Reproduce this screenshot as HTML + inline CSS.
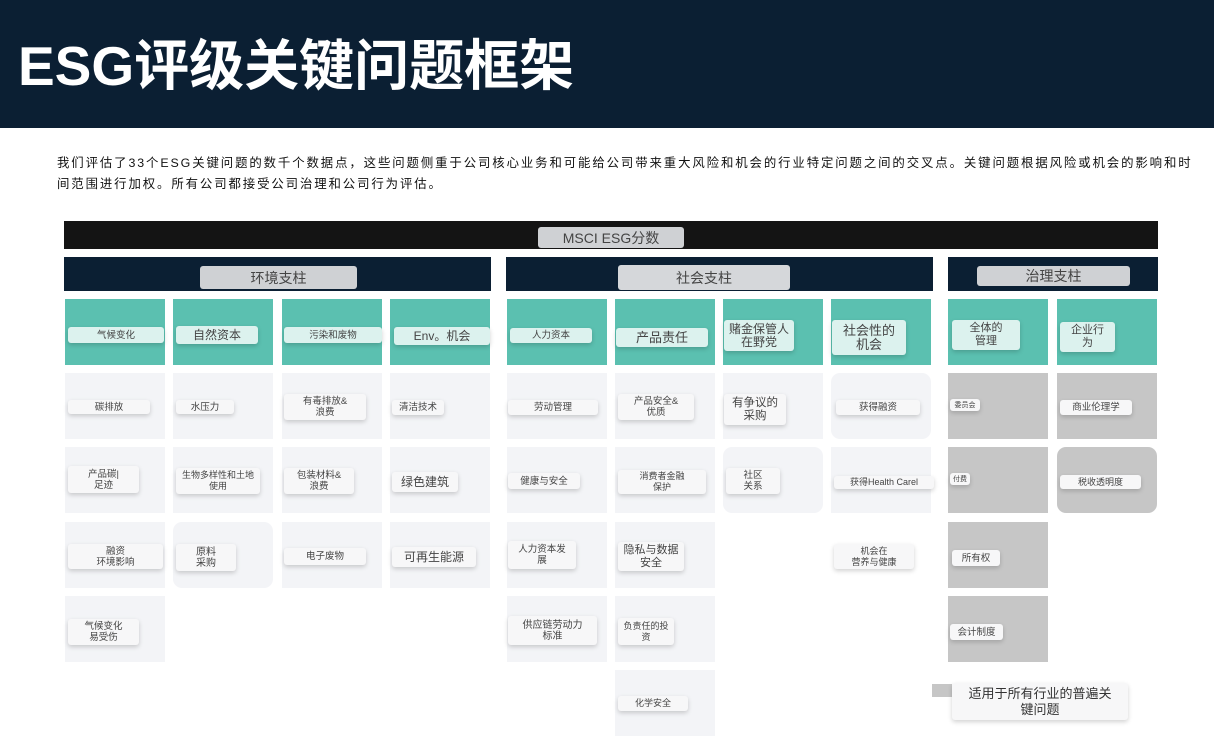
<!DOCTYPE html>
<html><head><meta charset="utf-8"><style>
*{margin:0;padding:0;box-sizing:border-box}
body{width:1214px;height:744px;background:#fff;position:relative;overflow:hidden;font-family:"Liberation Sans","Noto Sans CJK SC",sans-serif;color:#333}
.ban{position:absolute;left:0;top:0;width:1214px;height:128px;background:#0b1f33}
.ban h1{position:absolute;left:18px;top:21px;font-size:55px;font-weight:bold;color:#fff;font-family:"Liberation Sans","Noto Sans CJK SC",sans-serif}
.p{position:absolute;left:57px;top:153px;width:1150px;font-size:12.4px;letter-spacing:1.9px;line-height:21px;color:#111;white-space:nowrap}
.a{position:absolute}
.c{position:absolute;width:100px;height:66px;background:#f3f4f7}
.t{background:#5bc0b0}
.g{background:#c6c6c6}
.r{border-radius:9px}
.l{position:absolute;background:#f7f7f8;border-radius:3px;box-shadow:0 2px 5px rgba(0,0,0,.18);font-size:9.5px;line-height:11px;text-align:center;display:flex;align-items:center;justify-content:center;color:#444;white-space:pre-line}
.tl{background:#dcf2ee}
.ph{position:absolute;background:#0b1f33;height:34px;top:257px}
.pl{position:absolute;background:#cfd1d4;border-radius:3px;font-size:14px;color:#444;display:flex;align-items:center;justify-content:center}
</style></head><body>
<div class="ban"><h1>ESG评级关键问题框架</h1></div>
<div class="p">我们评估了33个ESG关键问题的数千个数据点，这些问题侧重于公司核心业务和可能给公司带来重大风险和机会的行业特定问题之间的交叉点。关键问题根据风险或机会的影响和时<br>间范围进行加权。所有公司都接受公司治理和公司行为评估。</div>
<div class="a" style="left:64px;top:221px;width:1094px;height:28px;background:#141414"></div>
<div class="pl" style="left:538px;top:227px;width:146px;height:21px">MSCI ESG分数</div>
<div class="ph" style="left:64px;width:427px"></div>
<div class="ph" style="left:506px;width:427px"></div>
<div class="ph" style="left:948px;width:210px"></div>
<div class="pl" style="left:200px;top:266px;width:157px;height:23px">环境支柱</div>
<div class="pl" style="left:618px;top:265px;width:172px;height:25px;background:#d5d7da">社会支柱</div>
<div class="pl" style="left:977px;top:266px;width:153px;height:20px">治理支柱</div>

<div class="c t" style="left:65px;top:299px"></div><div class="c t" style="left:173px;top:299px"></div><div class="c t" style="left:282px;top:299px"></div><div class="c t" style="left:390px;top:299px"></div>
<div class="c t" style="left:507px;top:299px"></div><div class="c t" style="left:615px;top:299px"></div><div class="c t" style="left:723px;top:299px"></div><div class="c t" style="left:831px;top:299px"></div>
<div class="c t" style="left:948px;top:299px"></div><div class="c t" style="left:1057px;top:299px"></div>
<div class="c" style="left:65px;top:373px"></div><div class="c" style="left:65px;top:447px"></div><div class="c" style="left:65px;top:522px"></div><div class="c" style="left:65px;top:596px"></div>
<div class="c" style="left:173px;top:373px"></div><div class="c" style="left:173px;top:447px"></div><div class="c r" style="left:173px;top:522px"></div>
<div class="c" style="left:282px;top:373px"></div><div class="c" style="left:282px;top:447px"></div><div class="c" style="left:282px;top:522px"></div>
<div class="c" style="left:390px;top:373px"></div><div class="c" style="left:390px;top:447px"></div><div class="c" style="left:390px;top:522px"></div>
<div class="c" style="left:507px;top:373px"></div><div class="c" style="left:507px;top:447px"></div><div class="c" style="left:507px;top:522px"></div><div class="c" style="left:507px;top:596px"></div>
<div class="c" style="left:615px;top:373px"></div><div class="c" style="left:615px;top:447px"></div><div class="c" style="left:615px;top:522px"></div><div class="c" style="left:615px;top:596px"></div><div class="c" style="left:615px;top:670px"></div>
<div class="c" style="left:723px;top:373px"></div><div class="c r" style="left:723px;top:447px"></div>
<div class="c r" style="left:831px;top:373px"></div><div class="c" style="left:831px;top:447px"></div>
<div class="c g" style="left:948px;top:373px"></div><div class="c g" style="left:948px;top:447px"></div><div class="c g" style="left:948px;top:522px"></div><div class="c g" style="left:948px;top:596px"></div>
<div class="c g" style="left:1057px;top:373px"></div><div class="c g r" style="left:1057px;top:447px"></div>

<div class="l tl" style="left:68px;top:327px;width:96px;height:16px">气候变化</div>
<div class="l tl" style="left:176px;top:326px;width:82px;height:18px;font-size:12px">自然资本</div>
<div class="l tl" style="left:284px;top:327px;width:98px;height:16px">污染和废物</div>
<div class="l tl" style="left:394px;top:327px;width:96px;height:18px;font-size:12px">Env。机会</div>
<div class="l tl" style="left:510px;top:328px;width:82px;height:15px">人力资本</div>
<div class="l tl" style="left:616px;top:328px;width:92px;height:19px;font-size:13px">产品责任</div>
<div class="l tl" style="left:724px;top:320px;width:70px;height:31px;font-size:12px;line-height:13px">赌金保管人
在野党</div>
<div class="l tl" style="left:832px;top:320px;width:74px;height:35px;font-size:13px;line-height:14px">社会性的
机会</div>
<div class="l tl" style="left:952px;top:320px;width:68px;height:30px;font-size:11px;line-height:13px">全体的
管理</div>
<div class="l tl" style="left:1060px;top:322px;width:55px;height:30px;font-size:11px;line-height:13px">企业行
为</div>

<div class="l" style="left:68px;top:400px;width:82px;height:14px">碳排放</div>
<div class="l" style="left:68px;top:466px;width:71px;height:27px">产品碳|
足迹</div>
<div class="l" style="left:68px;top:544px;width:95px;height:25px">融资
环境影响</div>
<div class="l" style="left:68px;top:619px;width:71px;height:26px">气候变化
易受伤</div>
<div class="l" style="left:176px;top:400px;width:58px;height:14px">水压力</div>
<div class="l" style="left:176px;top:468px;width:84px;height:26px;font-size:9px">生物多样性和土地
使用</div>
<div class="l" style="left:176px;top:544px;width:60px;height:27px;font-size:10px">原料
采购</div>
<div class="l" style="left:284px;top:394px;width:82px;height:26px">有毒排放&
浪费</div>
<div class="l" style="left:284px;top:468px;width:70px;height:26px">包装材料&
浪费</div>
<div class="l" style="left:284px;top:548px;width:82px;height:17px">电子废物</div>
<div class="l" style="left:392px;top:400px;width:52px;height:15px">清洁技术</div>
<div class="l" style="left:392px;top:472px;width:66px;height:20px;font-size:12px">绿色建筑</div>
<div class="l" style="left:392px;top:547px;width:84px;height:20px;font-size:12px">可再生能源</div>

<div class="l" style="left:508px;top:400px;width:90px;height:15px">劳动管理</div>
<div class="l" style="left:508px;top:473px;width:72px;height:16px">健康与安全</div>
<div class="l" style="left:508px;top:541px;width:68px;height:28px">人力资本发
展</div>
<div class="l" style="left:508px;top:616px;width:89px;height:29px;font-size:10px">供应链劳动力
标准</div>
<div class="l" style="left:618px;top:394px;width:76px;height:26px">产品安全&
优质</div>
<div class="l" style="left:618px;top:470px;width:88px;height:24px;font-size:9px">消费者金融
保护</div>
<div class="l" style="left:618px;top:542px;width:66px;height:29px;font-size:11px;line-height:13px">隐私与数据
安全</div>
<div class="l" style="left:618px;top:618px;width:56px;height:27px;font-size:9px">负责任的投
资</div>
<div class="l" style="left:618px;top:696px;width:70px;height:15px;font-size:9px">化学安全</div>
<div class="l" style="left:724px;top:394px;width:62px;height:31px;font-size:11.5px;line-height:13px">有争议的
采购</div>
<div class="l" style="left:726px;top:468px;width:54px;height:26px">社区
关系</div>
<div class="l" style="left:836px;top:400px;width:84px;height:15px">获得融资</div>
<div class="l" style="left:834px;top:476px;width:100px;height:13px;font-size:9px">获得Health Carel</div>
<div class="l" style="left:834px;top:544px;width:80px;height:25px;font-size:9px">机会在
营养与健康</div>

<div class="l" style="left:950px;top:399px;width:30px;height:12px;font-size:7px">委员会</div>
<div class="l" style="left:950px;top:473px;width:20px;height:12px;font-size:7px">付费</div>
<div class="l" style="left:952px;top:550px;width:48px;height:16px">所有权</div>
<div class="l" style="left:950px;top:624px;width:53px;height:16px">会计制度</div>
<div class="l" style="left:1060px;top:400px;width:72px;height:15px">商业伦理学</div>
<div class="l" style="left:1060px;top:475px;width:81px;height:14px;font-size:9px">税收透明度</div>

<div class="a" style="left:932px;top:684px;width:20px;height:13px;background:#c6c6c6"></div>
<div class="l" style="left:952px;top:683px;width:176px;height:37px;font-size:13px;line-height:16px;color:#333">适用于所有行业的普遍关
键问题</div>
</body></html>
